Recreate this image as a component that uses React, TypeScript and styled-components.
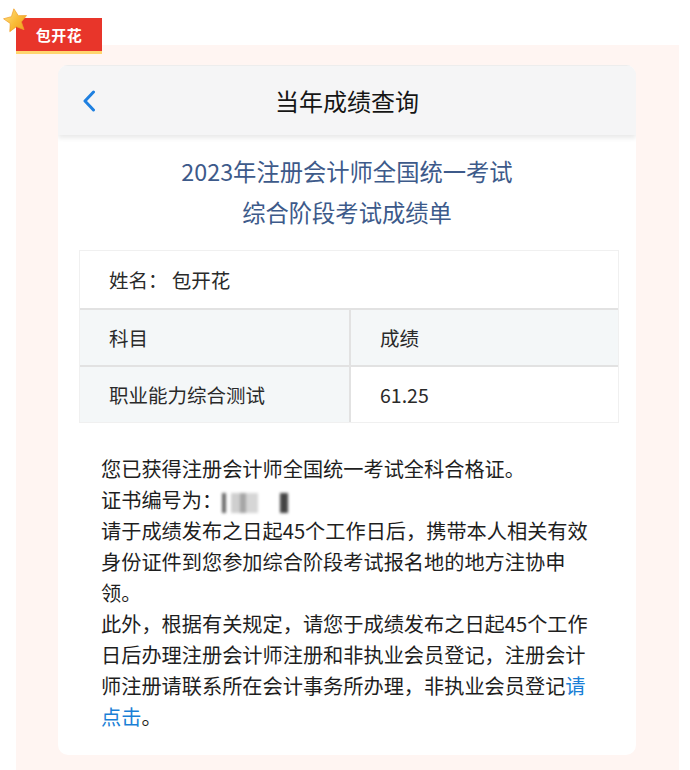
import React from 'react'
import styled, { createGlobalStyle } from 'styled-components'

const GlobalStyle = createGlobalStyle`
  html, body {
    margin: 0;
    padding: 0;
    background: #ffffff;
  }
  body {
    font-family: "Noto Sans CJK SC", "Noto Sans", sans-serif;
    color: #222;
  }
`;

const rows = [
    { subject: '职业能力综合测试', score: '61.25' },
];

function Star() {
    return (
        <StarIcon viewBox="0 0 24 24" width="27" height="27">
            <defs>
                <linearGradient id="starGrad" x1="0" y1="0" x2="1" y2="1">
                    <stop offset="0" stopColor="#ffe58a" />
                    <stop offset="0.55" stopColor="#f9bb36" />
                    <stop offset="1" stopColor="#ee9a1c" />
                </linearGradient>
            </defs>
            <path
                d="M12 1.5l3.1 6.6 7.2.9-5.3 5 1.4 7.1L12 17.6l-6.4 3.5L7 14l-5.3-5 7.2-.9z"
                fill="url(#starGrad)"
                stroke="#f0a028"
                strokeWidth="0.6"
                strokeLinejoin="round"
            />
        </StarIcon>
    )
}

function BackArrow() {
    return (
        <svg width="14" height="22" viewBox="0 0 14 22">
            <path d="M11.5 2 L3 11 L11.5 20" fill="none" stroke="#1f80e0" strokeWidth="3" strokeLinecap="round" strokeLinejoin="round" />
        </svg>
    )
}

function App() {
    return (
        <Page>
            <GlobalStyle />
            <Tag>
                <Star />
                <TagLabel>包开花</TagLabel>
            </Tag>
            <Panel>
                <Card>
                    <NavBar>
                        <BackButton><BackArrow /></BackButton>
                        <NavTitle>当年成绩查询</NavTitle>
                    </NavBar>
                    <Heading>
                        <div>2023年注册会计师全国统一考试</div>
                        <div>综合阶段考试成绩单</div>
                    </Heading>
                    <ScoreTable>
                        <NameCell>姓名： 包开花</NameCell>
                        <Cell shaded>科目</Cell>
                        <Cell shaded divider>成绩</Cell>
                        {rows.map((r) => (
                            <React.Fragment key={r.subject}>
                                <Cell shaded>{r.subject}</Cell>
                                <Cell divider>{r.score}</Cell>
                            </React.Fragment>
                        ))}
                    </ScoreTable>
                    <Notice>
                        您已获得注册会计师全国统一考试全科合格证。<br />
                        证书编号为：<CertNo><Blur /></CertNo><br />
                        请于成绩发布之日起45个工作日后，携带本人相关有效身份证件到您参加综合阶段考试报名地的地方注协申领。<br />
                        此外，根据有关规定，请您于成绩发布之日起45个工作日后办理注册会计师注册和非执业会员登记，注册会计师注册请联系所在会计事务所办理，非执业会员登记<Link>请点击</Link>。
                    </Notice>
                </Card>
            </Panel>
        </Page>
    )
}

export default App

const Page = styled.div`
position: relative;
width: 690px;
min-height: 770px;
padding-top: 45px;
box-sizing: border-box;
overflow: hidden;
`;

const Tag = styled.div`
position: absolute;
top: 18px;
left: 16px;
z-index: 2;
`;

const StarIcon = styled.svg`
position: absolute;
top: -11px;
left: -14px;
transform: rotate(-8deg);
`;

const TagLabel = styled.div`
width: 86px;
height: 33px;
display: flex;
align-items: center;
justify-content: center;
background: #e8352a;
border-bottom: 3px solid #ffd56e;
color: #fff;
font-size: 15px;
font-weight: 700;
letter-spacing: 0.5px;
`;

const Panel = styled.div`
margin-left: 16px;
width: 663px;
min-height: 725px;
background: #fff5f2;
padding: 20px 43px 0 42px;
box-sizing: border-box;
`;

const Card = styled.div`
background: #fff;
border-radius: 10px;
overflow: hidden;
height: 690px;
`;

const NavBar = styled.div`
position: relative;
height: 70px;
display: flex;
align-items: center;
justify-content: center;
background: #f5f5f6;
border-top: 1px solid #ededed;
box-sizing: border-box;
box-shadow: 0 3px 5px rgba(0, 0, 0, 0.09);
`;

const BackButton = styled.div`
position: absolute;
left: 24px;
top: 24px;
display: flex;
`;

const NavTitle = styled.div`
font-size: 24px;
color: #151515;
font-weight: 400;
`;

const Heading = styled.div`
padding-top: 16px;
text-align: center;
font-size: 23.3px;
line-height: 41px;
color: #3d5a8a;
`;

const ScoreTable = styled.div`
margin: 17px 17px 0 21px;
display: grid;
grid-template-columns: 1fr 1fr;
border: 1px solid #f0f0f0;
`;

const Cell = styled.div<{ shaded?: boolean; divider?: boolean }>`
height: 57px;
display: flex;
align-items: center;
padding-left: 29px;
box-sizing: border-box;
font-size: 19.5px;
color: #2a2a2a;
background: ${(p) => (p.shaded ? '#f4f7f8' : '#fff')};
border-top: 2px solid #e2e2e2;
border-left: ${(p) => (p.divider ? '2px solid #e2e2e2' : 'none')};
`;

const NameCell = styled(Cell)`
grid-column: 1 / span 2;
border-top: none;
`;

const Notice = styled.div`
margin: 30px 0 0 43px;
width: 492px;
font-size: 20.2px;
line-height: 31px;
color: #1e1e1e;
`;

const CertNo = styled.span`
display: inline-block;
vertical-align: middle;
width: 76px;
height: 20px;
`;

const Blur = styled.span`
display: block;
width: 100%;
height: 100%;
filter: blur(1.8px);
background:
  linear-gradient(90deg, #666 0 4px, transparent 4px 9px, #cfcfcf 9px 18px, #a5a5a5 18px 24px, #d6d6d6 24px 36px, transparent 36px 58px, #444 58px 66px, transparent 66px);
`;

const Link = styled.span`
color: #1a7fd6;
`;
